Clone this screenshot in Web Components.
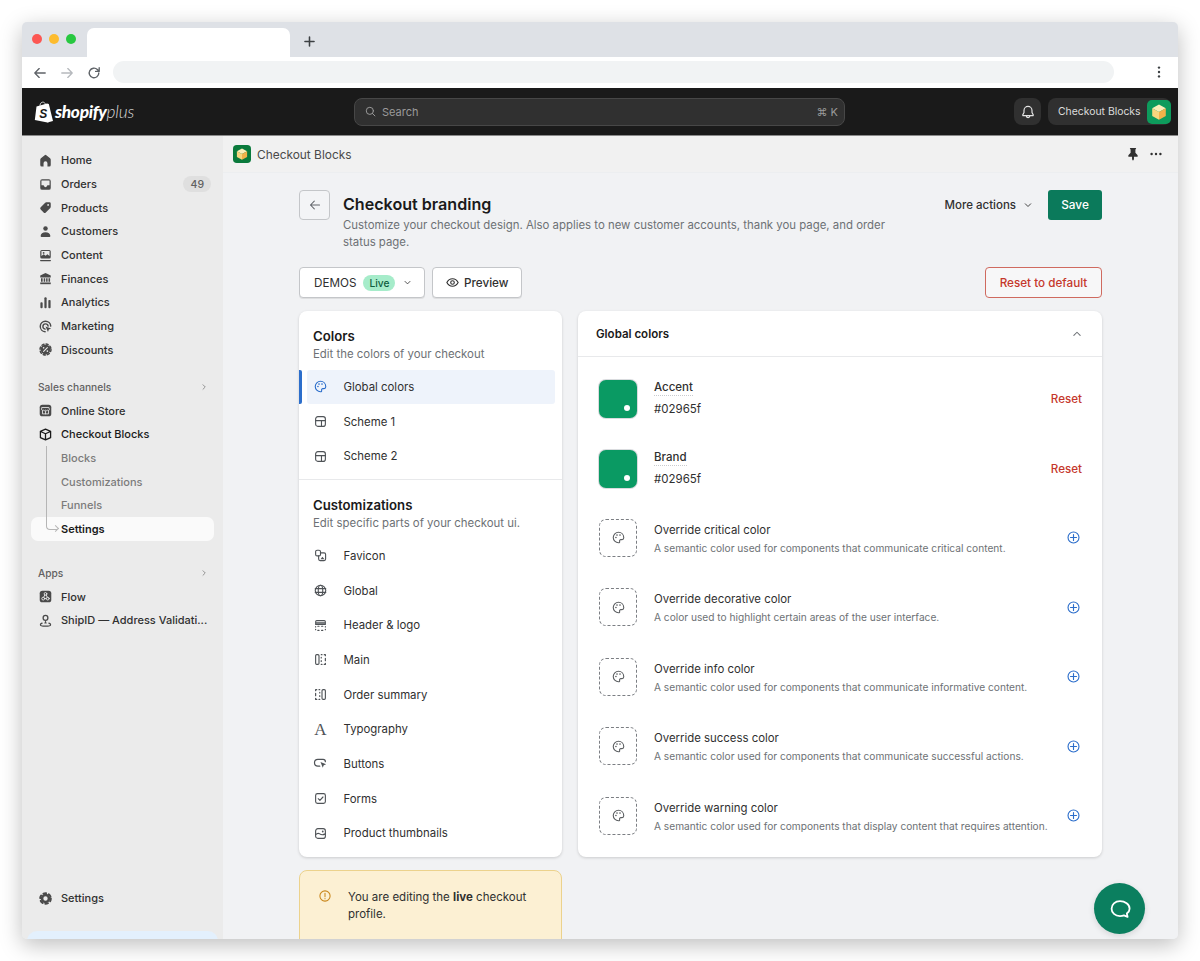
<!DOCTYPE html>
<html lang="en">
<head>
<meta charset="UTF-8">
<title>Checkout branding</title>
<style>
  html, body { margin: 0; height: 100%; background: #fff; overflow: hidden; }
  body { padding: 22px; box-sizing: border-box; font: 400 11.4px Inter, "Liberation Sans", sans-serif; color: #303030; height: 961px; }
</style>
</head>
<body>
<browser-frame>
  <admin-topbar></admin-topbar>
  <div style="display:flex;flex:1;min-height:0">
    <side-nav>
      <nav-item icon="home">Home</nav-item>
      <nav-item icon="orders" badge="49">Orders</nav-item>
      <nav-item icon="tag">Products</nav-item>
      <nav-item icon="person">Customers</nav-item>
      <nav-item icon="content">Content</nav-item>
      <nav-item icon="bank">Finances</nav-item>
      <nav-item icon="bars">Analytics</nav-item>
      <nav-item icon="target">Marketing</nav-item>
      <nav-item icon="percent">Discounts</nav-item>
      <nav-head style="margin-top:13.500px">Sales channels</nav-head>
      <nav-item icon="store">Online Store</nav-item>
      <nav-item icon="box" strong>Checkout Blocks</nav-item>
      <nav-item sub>Blocks</nav-item>
      <nav-item sub>Customizations</nav-item>
      <nav-item sub>Funnels</nav-item>
      <nav-item sub last current>Settings</nav-item>
      <nav-head style="margin-top:20px">Apps</nav-head>
      <nav-item icon="flow">Flow</nav-item>
      <nav-item icon="pin">ShipID — Address Validati...</nav-item>
      <nav-item icon="gear" slot="foot">Settings</nav-item>
    </side-nav>
    <app-content>
      <page-head slot="head"></page-head>
      <menu-card slot="left" title="Colors" sub="Edit the colors of your checkout" divided>
        <menu-item icon="palette" active>Global colors</menu-item>
        <menu-item icon="scheme">Scheme 1</menu-item>
        <menu-item icon="scheme">Scheme 2</menu-item>
      </menu-card>
      <menu-card slot="left" title="Customizations" sub="Edit specific parts of your checkout ui.">
        <menu-item icon="favicon">Favicon</menu-item>
        <menu-item icon="globe">Global</menu-item>
        <menu-item icon="header">Header &amp; logo</menu-item>
        <menu-item icon="main">Main</menu-item>
        <menu-item icon="summary">Order summary</menu-item>
        <menu-item icon="type">Typography</menu-item>
        <menu-item icon="cursor">Buttons</menu-item>
        <menu-item icon="check">Forms</menu-item>
        <menu-item icon="thumb">Product thumbnails</menu-item>
      </menu-card>
      <notice-box slot="notice"><span>You are editing the</span> <b>live</b> <span>checkout</span><br><span>profile.</span></notice-box>
      <color-panel slot="right">
        <color-row name="Accent" hex="#02965f"></color-row>
        <color-row name="Brand" hex="#02965f"></color-row>
        <override-row name="Override critical color">A semantic color used for components that communicate critical content.</override-row>
        <override-row name="Override decorative color">A color used to highlight certain areas of the user interface.</override-row>
        <override-row name="Override info color">A semantic color used for components that communicate informative content.</override-row>
        <override-row name="Override success color">A semantic color used for components that communicate successful actions.</override-row>
        <override-row name="Override warning color">A semantic color used for components that display content that requires attention.</override-row>
      </color-panel>
    </app-content>
  </div>
  <chat-fab></chat-fab>
</browser-frame>

<script>
const ICONS = {
  home: '<path class="f" d="M8.900 2.900a1.700 1.700 0 0 1 2.200 0l5 4c.6.5.9 1.200.9 2V16a2 2 0 0 1-2 2h-2.400v-4.400a2.600 2.600 0 0 0-5.200 0V18H5a2 2 0 0 1-2-2V8.900c0-.8.3-1.500.9-2z"/>',
  orders: '<path class="f" fill-rule="evenodd" d="M5.500 3h9A2.500 2.500 0 0 1 17 5.500v9a2.500 2.500 0 0 1-2.500 2.500h-9A2.500 2.500 0 0 1 3 14.500v-9A2.500 2.500 0 0 1 5.500 3zm-.9 1.600v6.400h2.500c.5 0 .9.400 1 .9.200.9 1 1.600 1.900 1.600s1.700-.7 1.900-1.600c.1-.5.5-.9 1-.9h2.500V4.600z"/>',
  tag: '<path class="f" fill-rule="evenodd" d="M11 3h4.300A1.700 1.700 0 0 1 17 4.700V9c0 .6-.2 1.100-.6 1.500l-6 6a2 2 0 0 1-2.900 0l-3.900-3.900a2 2 0 0 1 0-2.900l6-6c.4-.4.900-.7 1.400-.7zm2.500 2.300a1.200 1.200 0 1 0 0 2.400 1.200 1.200 0 0 0 0-2.400z"/>',
  person: '<circle class="f" cx="10" cy="6" r="3"/><path class="f" d="M3.500 16c0-3 2.800-5 6.500-5s6.500 2 6.500 5c0 .7-.5 1.200-1.200 1.200H4.700c-.7 0-1.200-.5-1.200-1.200z"/>',
  content: '<path class="f" fill-rule="evenodd" d="M5 2.500h10a2 2 0 0 1 2 2V12a2 2 0 0 1-2 2H5a2 2 0 0 1-2-2V4.500a2 2 0 0 1 2-2zm-.4 1.600v6.500l3-2.400 2.600 2 2.300-2 2.900 2.400V4.100z"/><circle class="f" cx="7.500" cy="6.500" r="1.200"/><path d="M3.500 16.800h13" stroke-width="1.600"/>',
  bank: '<path class="f" d="M10 2.500l7 3.600v2.400H3V6.100z"/><path class="f" d="M4 9.500h2.200v4.800H4zM7.600 9.500h2v4.800h-2zM10.800 9.500h2v4.800h-2zM14 9.500h2.100v4.800H14z"/><path class="f" d="M3 15.300h14v2.300H3z"/>',
  bars: '<rect class="f" x="3.200" y="9.500" width="3" height="8" rx="1.300"/><rect class="f" x="8.500" y="3" width="3" height="14.500" rx="1.300"/><rect class="f" x="13.800" y="6.500" width="3" height="11" rx="1.300"/>',
  target: '<path d="M17 9.500a7 7 0 1 0-7.500 7.500" stroke-width="1.900"/><path d="M13.500 9.500a3.500 3.500 0 1 0-4 4" stroke-width="1.900"/><path class="f" d="M10 10l7.500 2.700-3 1.200-1.200 3.400z"/>',
  percent: '<circle cx="10" cy="10" r="6.500" class="f"/><circle cx="10" cy="10" r="7.300" stroke-width="2" stroke-dasharray="2.860 2.860"/><path d="M7.500 12.500l5-5" stroke="#ebebeb" stroke-width="1.500"/><circle cx="7.500" cy="7.800" r="1.100" fill="#ebebeb" stroke="none"/><circle cx="12.500" cy="12.200" r="1.100" fill="#ebebeb" stroke="none"/>',
  gear: '<circle cx="10" cy="10" r="4.600" stroke-width="3.400"/><circle cx="10" cy="10" r="7.100" stroke-width="2.600" stroke-dasharray="3.700 3.730"/>',
  store: '<rect class="f" x="2.300" y="2.300" width="15.400" height="15.400" rx="3.500"/><path d="M5.500 6h9l.7 2.600a1.500 1.500 0 0 1-2.600 1 1.800 1.800 0 0 1-2.600 0 1.800 1.800 0 0 1-2.600 0 1.500 1.500 0 0 1-2.600-1zM6 10.500V14.500h8v-4M10 11v3.500" stroke="#ebebeb" stroke-width="1.100"/>',
  box: '<path d="M10 2.800l6.800 3v8.400L10 17.200l-6.800-3V5.800zM3.400 6L10 9l6.600-3M10 9v8" stroke-width="1.700" stroke-linejoin="round"/>',
  flow: '<rect class="f" x="2.300" y="2.300" width="15.400" height="15.400" rx="3.500"/><g stroke="#ebebeb" stroke-width="1.200"><circle cx="10" cy="6.500" r="1.800"/><circle cx="7" cy="12.800" r="1.900"/><circle cx="13" cy="12.800" r="1.900"/><path d="M9 8l-1.300 3M11 8l1.300 3M9 12.800h2"/></g>',
  pin: '<circle cx="10" cy="6.500" r="3.200" stroke-width="1.700"/><path class="f" d="M10 9.800l1.700 4.200h-3.400z"/><path d="M5.500 13.500c-1.500.5-2.300 1.200-2.300 2 0 1 2.500 2 6.800 2s6.800-1 6.800-2c0-.8-.8-1.500-2.300-2" stroke-width="1.600"/>',
  palette: '<path d="M10 3a7 7 0 0 0 0 14c1.300 0 1.800-.9 1.500-1.800-.4-1.200.3-2.300 1.700-2.300h1.500c1.300 0 2.300-1 2.300-2.500C17 6 14 3 10 3z"/><circle class="f" cx="6.600" cy="10" r="1.100"/><circle class="f" cx="8" cy="6.800" r="1.100"/><circle class="f" cx="12" cy="6.800" r="1.100"/>',
  scheme: '<rect x="3.500" y="3.500" width="13" height="13" rx="3"/><path d="M3.500 8.800h13M11.300 8.800v7.700"/>',
  favicon: '<path d="M8 3H5.500a2 2 0 0 0-2 2v3.500a2 2 0 0 0 2 2H8a2 2 0 0 0 2-2V5a2 2 0 0 0-2-2z"/><path d="M10 6.500h4.800a2 2 0 0 1 2 2v6.300a2 2 0 0 1-2 2H9.500a2 2 0 0 1-2-2v-4.300"/><path class="f" d="M10 15l2.500-3.200 2.800 3.200z"/>',
  globe: '<circle cx="10" cy="10" r="7"/><ellipse cx="10" cy="10" rx="3" ry="7"/><path d="M3 7.500h14M3 12.500h14"/>',
  header: '<path d="M3.500 8.500V5a1.500 1.500 0 0 1 1.500-1.500h10A1.500 1.500 0 0 1 16.500 5v3.500zM3.500 6.500h13" stroke-width="1.400"/><path d="M3.500 12v-.5M6.500 11h1.500M11.500 11H13M16.500 11.500v.5M16.500 15v.5M13 16.500h-1.500M8 16.500H6.500M3.500 15.500V15" stroke-width="1.600"/>',
  main: '<rect x="3.500" y="3.500" width="4.500" height="13" rx="1.500"/><path d="M11 3.500h1M15 3.500h1.500V5M16.500 8.500v3M16.500 15v1.500H15M12 16.500h-1M11 12.500v-1M11 8v-1" stroke-width="1.600"/>',
  summary: '<path d="M5 3.500H3.500V5M8 3.500h1M9 7v1M9 11.500v1M9 16.500H8M5 16.500H3.500V15M3.500 11.500v-3" stroke-width="1.600"/><rect x="12" y="3.500" width="4.500" height="13" rx="1.500"/>',
  cursor: '<path d="M16.500 7.500a3 3 0 0 0-3-3h-7a3.500 3.500 0 0 0 0 9H9" stroke-width="1.600"/><path class="f" d="M10 8l7.500 3-3.200 1.300-1.300 3.500z"/>',
  check: '<rect x="3.500" y="3.500" width="13" height="13" rx="2.500"/><path d="M7 10.300l2.200 2.200L13.300 8"/>',
  thumb: '<rect x="3.500" y="3.500" width="13" height="13" rx="3"/><path d="M3.500 11.500c2-2 3.500-2.500 5.500-1s3.500 2 7.500 0"/><circle class="f" cx="13" cy="7.300" r="1.200"/>',
  search: '<circle cx="9" cy="9" r="5.500"/><path d="M13 13l3.800 3.800"/>',
  bell: '<path d="M10 3a5 5 0 0 0-5 5v2.500L3.500 13.500c-.2.500 0 1 .6 1h11.800c.6 0 .8-.5.6-1L15 10.500V8a5 5 0 0 0-5-5zM7.800 14.500v.3a2.200 2.200 0 0 0 4.400 0v-.3" stroke-linejoin="round"/>',
  pinned: '<path class="f" d="M6 2.500h8l-1 2.200v3.800l2.800 3.200v1.800h-4.600v3l-1.200 2-1.200-2v-3H4.200v-1.800L7 8.500V4.700z"/>',
  dots: '<circle class="f" cx="4.500" cy="10" r="1.500"/><circle class="f" cx="10" cy="10" r="1.500"/><circle class="f" cx="15.500" cy="10" r="1.500"/>',
  vdots: '<circle class="f" cx="10" cy="4.500" r="1.500"/><circle class="f" cx="10" cy="10" r="1.500"/><circle class="f" cx="10" cy="15.500" r="1.500"/>',
  left: '<path d="M16.500 10h-13M9 4.500L3.500 10 9 15.500"/>',
  right: '<path d="M3.500 10h13M11 4.500l5.500 5.500-5.500 5.500"/>',
  reload: '<path d="M16 10a6 6 0 1 1-1.800-4.300L16.500 8M16.500 3.500V8H12"/>',
  plus: '<path d="M10 3v14M3 10h14"/>',
  down: '<path d="M5.500 8l4.500 4.500L14.500 8"/>',
  up: '<path d="M5.500 12L10 7.500l4.500 4.500"/>',
  chev: '<path d="M8 5.500l4.500 4.500L8 14.500"/>',
  eye: '<path d="M2.500 10c1.800-3.500 4.300-5 7.500-5s5.700 1.500 7.500 5c-1.800 3.500-4.300 5-7.500 5s-5.700-1.500-7.500-5z"/><circle cx="10" cy="10" r="2.400"/>',
  addc: '<circle cx="10" cy="10" r="7.300"/><path d="M10 6v8M6 10h8"/>',
  warn: '<circle cx="10" cy="10" r="7.300"/><path d="M10 6v5M10 13.500v.4"/>',
  chat: '<path d="M10 3.500c-4.100 0-7 2.700-7 6.200s2.900 6.200 7 6.200c1.300 0 2.300-.2 3.300-.6l3 1.200-.6-2.700c1.300-1.100 2.300-2.500 2.300-4.100 0-3.500-3.900-6.200-8-6.200z"/>'
};

// small helper so each element is just a stylesheet and some markup
function component(tag, css, html, onConnect) {
  customElements.define(tag, class extends HTMLElement {
    constructor() {
      super();
      this.attachShadow({mode: "open"}).innerHTML = `<style>${css}</style>` + (typeof html === "function" ? html(this) : html);
    }
    connectedCallback() {
      const root = this.shadowRoot;
      if (typeof html === "function") root.innerHTML = `<style>${css}</style>` + html(this);
      onConnect && onConnect(this, root);
    }
  });
}

component("x-icon", `
  :host { display: inline-flex; flex: none; width: var(--s, 16px); height: var(--s, 16px); }
  svg { width: 100%; height: 100%; fill: none; stroke: currentColor; stroke-width: var(--sw, 1.500); stroke-linecap: round; stroke-linejoin: round; }
  .f { fill: currentColor; stroke: none; }
`, h => `<svg viewBox="0 0 20 20">${ICONS[h.getAttribute("name")] || ""}</svg>`);

component("cube-logo", `
  :host { display: inline-flex; flex: none; width: var(--s, 18px); height: var(--s, 18px); }
  svg { width: 100%; height: 100%; }
`, h => `<svg viewBox="0 0 24 24"><rect width="24" height="24" rx="5" fill="${h.getAttribute("bg") || "#0a7a3c"}"/>
  <path d="M12 4.500l6.800 3.800L12 12 5.200 8.300z" fill="#fbeeb9"/><path d="M5.200 8.300L12 12v7.800l-6.800-3.900z" fill="#f8d67e"/><path d="M18.800 8.300L12 12v7.800l6.800-3.900z" fill="#f1b24a"/></svg>`);

component("browser-frame", `
  :host { display: flex; flex-direction: column; position: relative; width: 1156px; height: 917px; border-radius: 5px; overflow: hidden;
          box-shadow: 0 6px 22px rgba(0,0,0,.26); background: #f1f2f4; }
  .tabs { height: 35px; background: #dee1e6; display: flex; flex: none; box-sizing: border-box; padding-top: 6px; }
  .lights { display: flex; gap: 7px; padding: 6px 0 0 10px; width: 65px; box-sizing: border-box; }
  .lights i { width: 10px; height: 10px; border-radius: 50%; }
  .tab { width: 203px; background: #fff; border-radius: 7px 7px 0 0; }
  .new { margin: 7px 0 0 13px; color: #3c4043; --s: 13px; --sw: 2.400; }
  .bar { height: 31px; background: #fff; display: flex; align-items: center; flex: none; color: #5f6368; padding: 0 0 5px 0; box-sizing: border-box; --sw: 1.700; }
  .bar x-icon { --s: 16px; }
  .url { flex: 1; height: 22px; margin-top: 3px; background: #f1f3f4; border-radius: 11px; margin-left: 11px; }
  .back { margin-left: 10px; margin-top: 5px; }
  .fwd { margin-left: 11px; margin-top: 5px; color: #b6b9bd; }
  .rel { margin-left: 11px; margin-top: 5px; }
  .menu { margin: 4px 11px 0 37px; color: #3c4043; }
`, `
  <div class="tabs">
    <div class="lights"><i style="background:#fc5753"></i><i style="background:#fdbc2e"></i><i style="background:#27c840"></i></div>
    <div class="tab"></div>
    <x-icon class="new" name="plus"></x-icon>
  </div>
  <div class="bar">
    <x-icon class="back" name="left"></x-icon><x-icon class="fwd" name="right"></x-icon><x-icon class="rel" name="reload"></x-icon>
    <div class="url"></div>
    <x-icon class="menu" name="vdots"></x-icon>
  </div>
  <slot></slot>
`);

component("admin-topbar", `
  :host { display: flex; align-items: center; flex: none; height: 48px; background: #1a1a1a; box-sizing: border-box; border-bottom: 1px solid #8a8a8a; padding: 0 7px 0 12px; position: relative; }
  .logo { display: flex; align-items: center; width: 320px; color: #fff; font-family: Lato, sans-serif; font-style: italic; font-size: 17.300px; letter-spacing: -.3px; }
  .logo svg { width: 20px; height: 22px; margin-right: 1px; }
  .logo b { font-weight: 900; }
  .logo span { font-weight: 300; letter-spacing: -.2px; color: #d8d8d8; }
  .search { width: 491px; height: 28px; box-sizing: border-box; background: #303030; border: 1px solid #474747; border-radius: 8px; display: flex; align-items: center; padding: 0 6px 0 9px; color: #9a9a9a; gap: 5px; font-size: 11px; }
  .search x-icon { --s: 13px; }
  .search .k { margin-left: auto; font-size: 11px; }
  .bell { margin-left: auto; width: 27px; height: 27px; border-radius: 8px; background: #303030; color: #e3e3e3; display: flex; align-items: center; justify-content: center; --s: 16px; }
  .acct { margin-left: 7px; height: 27px; width: 123px; box-sizing: border-box; border-radius: 8px; background: #303030; color: #dcdcdc; display: flex; align-items: center; padding-left: 10px; font-size: 10.400px; font-weight: 400; white-space: nowrap; position: relative; }
  .acct cube-logo { --s: 24px; position: absolute; right: 0; top: 2px; }
`, `
  <div class="logo">
    <svg viewBox="0 0 20 22"><path d="M2.500 5.500L13 2.500l1.800.6L19 20l-5.500 1.500L.8 19z" fill="#fff"/><path d="M6 6V4.500C6 2 8 .8 9.500 1.200S11.500 3 11.500 5M13 3l.9 18.500" fill="none" stroke="#fff" stroke-width=".8"/><text x="5.300" y="17" font-family="Liberation Sans, sans-serif" font-size="12" font-weight="700" font-style="italic" fill="#1a1a1a">S</text></svg>
    <b>shopify</b><span>plus</span>
  </div>
  <div class="search"><x-icon name="search"></x-icon>Search<span class="k">⌘ K</span></div>
  <div class="bell"><x-icon name="bell"></x-icon></div>
  <div class="acct">Checkout Blocks<cube-logo bg="#0d9b5c"></cube-logo></div>
`);

component("side-nav", `
  :host { display: flex; flex-direction: column; flex: none; width: 201px; box-sizing: border-box; background: #ebebeb; padding: 12.500px 9px 0; position: relative; overflow: hidden; }
  .foot { margin-top: auto; margin-bottom: 29px; }
  .promo { position: absolute; left: 5px; right: 5px; top: 795px; height: 60px; background: #e3f0fd; border-radius: 10px 10px 0 0; }
`, `<slot></slot><div class="foot"><slot name="foot"></slot></div><div class="promo"></div>`);

component("nav-head", `
  :host { display: flex; align-items: center; justify-content: space-between; height: 23.700px; padding: 0 5px 0 7px; font-size: 10.200px; font-weight: 500; color: #616161; }
  x-icon { --s: 10px; color: #777; }
`, `<slot></slot><x-icon name="chev"></x-icon>`);

component("nav-item", `
  :host { display: flex; align-items: center; height: 23.700px; box-sizing: border-box; padding: 0 3px 0 7px; font-size: 11px; font-weight: 500; color: #303030; position: relative; white-space: nowrap; }
  :host([sub]) { color: #7b7b7b; padding-left: 30px; }
  :host([strong]) { color: #1a1a1a; }
  :host([current]) { color: #1a1a1a; font-weight: 600; background: #fafafa; border-radius: 7px; }
  x-icon { --s: 15px; margin-right: 8px; color: #4a4a4a; }
  :host([strong]) x-icon { color: #1a1a1a; }
  .badge { margin-left: auto; height: 16px; padding: 0 7px; border-radius: 8px; background: #dfdfdf; color: #616161; font-size: 10.500px; display: flex; align-items: center; }
  .tree { position: absolute; left: 14.500px; top: 0; bottom: 0; width: 1.500px; background: #b5b5b5; }
  .elbow { position: absolute; left: 14.500px; top: 0; width: 11px; height: 13px; box-sizing: border-box; border-left: 1.500px solid #b5b5b5; border-bottom: 1.500px solid #b5b5b5; border-bottom-left-radius: 4px; }
  .tip { position: absolute; left: 22px; top: 9px; width: 4px; height: 4px; border-top: 1px solid #b5b5b5; border-right: 1px solid #b5b5b5; transform: rotate(45deg); }
`, h => `${h.hasAttribute("icon") ? `<x-icon name="${h.getAttribute("icon")}"></x-icon>` : ""}
  ${h.hasAttribute("sub") ? (h.hasAttribute("last") ? '<i class="elbow"></i><i class="tip"></i>' : '<i class="tree"></i>') : ""}
  <slot></slot>${h.hasAttribute("badge") ? `<span class="badge">${h.getAttribute("badge")}</span>` : ""}`);

component("app-content", `
  :host { flex: 1; min-width: 0; display: flex; flex-direction: column; overflow: hidden; background: #f1f2f4; }
  .crumb { flex: none; height: 37px; box-sizing: border-box; background: #f1f1f1; border-bottom: 1px solid #eceef0; display: flex; align-items: center; padding: 0 14px 0 10px; font-size: 11.900px; color: #4a4a4a; }
  .crumb cube-logo { --s: 18px; margin-right: 6px; }
  .crumb .r { margin-left: auto; display: flex; gap: 7px; color: #303030; --s: 16px; align-items: center; }
  .page { width: 803px; margin: 0 auto; padding-top: 17px; flex: none; }
  .grid { display: grid; grid-template-columns: 263px 524px; gap: 13px 16px; align-items: start; margin-top: 13px; }
  .l { display: block; background: #fff; border-radius: 8px; box-shadow: 0 1px 3px rgba(0,0,0,.16); height: 546px; overflow: hidden; }
`, `
  <div class="crumb"><cube-logo></cube-logo>Checkout Blocks<div class="r"><x-icon name="pinned"></x-icon><x-icon name="dots"></x-icon></div></div>
  <div class="page">
    <slot name="head"></slot>
    <div class="grid">
      <div class="l"><slot name="left"></slot></div>
      <slot name="right"></slot>
      <slot name="notice"></slot>
    </div>
  </div>
`);

component("page-head", `
  :host { display: block; }
  .top { display: flex; align-items: flex-start; height: 77px; }
  .back { width: 31px; height: 30px; box-sizing: border-box; border: 1px solid #c4c6c9; border-radius: 4px; background: #f3f4f6; color: #62656a; display: flex; align-items: center; justify-content: center; margin-right: 13px; --s: 14px; flex: none; }
  h1 { margin: 3px 0 2px; font-size: 16.100px; line-height: 22px; font-weight: 600; color: #1a1a1a; letter-spacing: 0; }
  p { margin: 0; font-size: 11.400px; line-height: 17px; color: #6d7175; width: 560px; }
  .more { margin-left: auto; display: flex; align-items: center; gap: 6px; height: 30px; font-size: 11.500px; font-weight: 500; color: #303030; --s: 12px; white-space: nowrap; }
  .save { margin-left: 14px; width: 54px; height: 30px; border-radius: 3px; background: #0b7a5b; color: #fff; font-size: 11.800px; font-weight: 500; display: flex; align-items: center; justify-content: center; flex: none; }
  .row { display: flex; gap: 7px; }
  .btn { height: 31px; box-sizing: border-box; background: #fff; border: 1px solid #c4c6c9; border-radius: 4px; box-shadow: 0 1px 0 rgba(0,0,0,.08); display: flex; align-items: center; font-size: 11.700px; color: #303030; white-space: nowrap; }
  .demos { width: 126px; padding-left: 14px; }
  .live { margin: 0 7px 0 7px; height: 16px; width: 32px; border-radius: 8px; background: #a6ecca; color: #0e5d3e; font-size: 10.200px; font-weight: 500; display: flex; align-items: center; justify-content: center; }
  .demos x-icon { --s: 11px; }
  .preview { width: 90px; padding-left: 12px; gap: 4px; font-weight: 500; --s: 15px; }
  .reset { margin-left: auto; width: 117px; justify-content: center; border-color: #cf6a5f; background: #f7f7f8; color: #c5372c; box-shadow: none; font-weight: 500; }
`, `
  <div class="top">
    <div class="back"><x-icon name="left"></x-icon></div>
    <div><h1>Checkout branding</h1><p>Customize your checkout design. Also applies to new customer accounts, thank you page, and order status page.</p></div>
    <div class="more">More actions <x-icon name="down"></x-icon></div>
    <div class="save">Save</div>
  </div>
  <div class="row">
    <div class="btn demos">DEMOS<span class="live">Live</span><x-icon name="down"></x-icon></div>
    <div class="btn preview"><x-icon name="eye"></x-icon>Preview</div>
    <div class="btn reset">Reset to default</div>
  </div>
`);

component("menu-card", `
  :host { display: block; padding-top: 15.500px; box-sizing: border-box; }
  :host([divided]) { height: 169px; border-bottom: 1px solid #e8e9eb; }
  h2 { margin: 0 0 0 14px; font-size: 13.200px; line-height: 18px; font-weight: 600; color: #1a1a1a; }
  p { margin: 0 0 7px 14px; font-size: 11.400px; line-height: 18px; color: #6d7175; }
`, h => `<h2>${h.getAttribute("title")}</h2><p>${h.getAttribute("sub")}</p><slot></slot>`);

component("menu-item", `
  :host { display: flex; align-items: center; height: 34.700px; margin-right: 7px; box-sizing: border-box; padding-left: 14px; font-size: 11.400px; color: #303030; position: relative; }
  x-icon { --s: 15px; margin-right: 15.500px; color: #4f5357; }
  :host([active]) { background: #eef3fb; margin-left: 8px; padding-left: 6px; border-radius: 3px; }
  :host([active]) x-icon { color: #2c6ecb; }
  :host([active]) i { position: absolute; left: -8px; top: 0; bottom: 0; width: 3px; background: #2c6ecb; border-radius: 0 2px 2px 0; }
  .a { width: 15px; margin-right: 15.500px; text-align: center; font: 400 17px/15px "Liberation Serif", serif; color: #4f5357; flex: none; }
`, h => `<i></i>${h.getAttribute("icon") === "type" ? '<span class="a">A</span>' : `<x-icon name="${h.getAttribute("icon")}"></x-icon>`}<slot></slot>`);

component("color-panel", `
  :host { display: block; background: #fff; border-radius: 8px; box-shadow: 0 1px 3px rgba(0,0,0,.16); height: 546px; overflow: hidden; }
  .head { height: 46px; box-sizing: border-box; border-bottom: 1px solid #e8e9eb; display: flex; align-items: center; justify-content: space-between; padding: 0 18px; font-size: 11.500px; font-weight: 600; color: #1a1a1a; }
  .head x-icon { --s: 14px; color: #6d7175; }
  .body { padding-top: 7.500px; }
`, `<div class="head">Global colors<x-icon name="up"></x-icon></div><div class="body"><slot></slot></div>`);

const rowCss = `
  :host { display: flex; align-items: center; height: 69.400px; padding: 0 20px 0 21px; box-sizing: border-box; }
  .sw { width: 38px; height: 38px; border-radius: 7px; flex: none; margin-right: 17px; box-sizing: border-box; position: relative; }
  .txt { flex: 1; min-width: 0; }
`;

component("color-row", rowCss + `
  .sw { background: #0a9a63; box-shadow: 0 0 0 1px #d9dbde; }
  .sw::after { content: ""; position: absolute; right: 7px; bottom: 7px; width: 6px; height: 6px; border-radius: 50%; background: #fff; }
  .n { font-size: 11.500px; line-height: 15px; font-weight: 500; color: #303030; display: inline-block; border-bottom: 1px dotted #c9cbcf; }
  .h { font-size: 11.500px; line-height: 17px; margin-top: 5px; color: #303030; }
  .reset { font-size: 11.600px; font-weight: 500; color: #c5372c; }
`, h => `<div class="sw"></div><div class="txt"><span class="n">${h.getAttribute("name")}</span><div class="h">${h.getAttribute("hex")}</div></div><div class="reset">Reset</div>`);

component("override-row", rowCss + `
  .sw { border: 1.500px dashed #7b7e83; color: #5c5f62; display: flex; align-items: center; justify-content: center; --s: 15px; background: #fff; }
  .txt { margin-top: 2px; }
  .n { font-size: 11.400px; line-height: 19px; color: #303030; }
  .d { font-size: 10.170px; line-height: 17px; color: #6d7175; white-space: nowrap; }
  .add { color: #2c6ecb; --s: 15px; margin: 0 1px 0 5px; }
`, h => `<div class="sw"><x-icon name="palette"></x-icon></div><div class="txt"><div class="n">${h.getAttribute("name")}</div><div class="d"><slot></slot></div></div><x-icon class="add" name="addc"></x-icon>`);

component("notice-box", `
  :host { display: flex; width: 263px; height: 100px; box-sizing: border-box; background: #fcf0d3; border: 1px solid #ecd28c; border-radius: 8px; padding: 18px 16px 0 18px; font-size: 11.500px; line-height: 17px; color: #303030; }
  x-icon { --s: 14px; color: #c9861a; margin-right: 16px; margin-top: 0; }
  div { width: 195px; }
`, `<x-icon name="warn"></x-icon><div><slot></slot></div>`);

component("chat-fab", `
  :host { position: absolute; right: 33px; bottom: 5px; width: 51px; height: 51px; border-radius: 50%; background: #0b7f5f; color: #fff; display: flex; align-items: center; justify-content: center; --s: 24px; box-shadow: 0 2px 6px rgba(0,0,0,.12); }
`, `<x-icon name="chat"></x-icon>`);
</script>
</body>
</html>
